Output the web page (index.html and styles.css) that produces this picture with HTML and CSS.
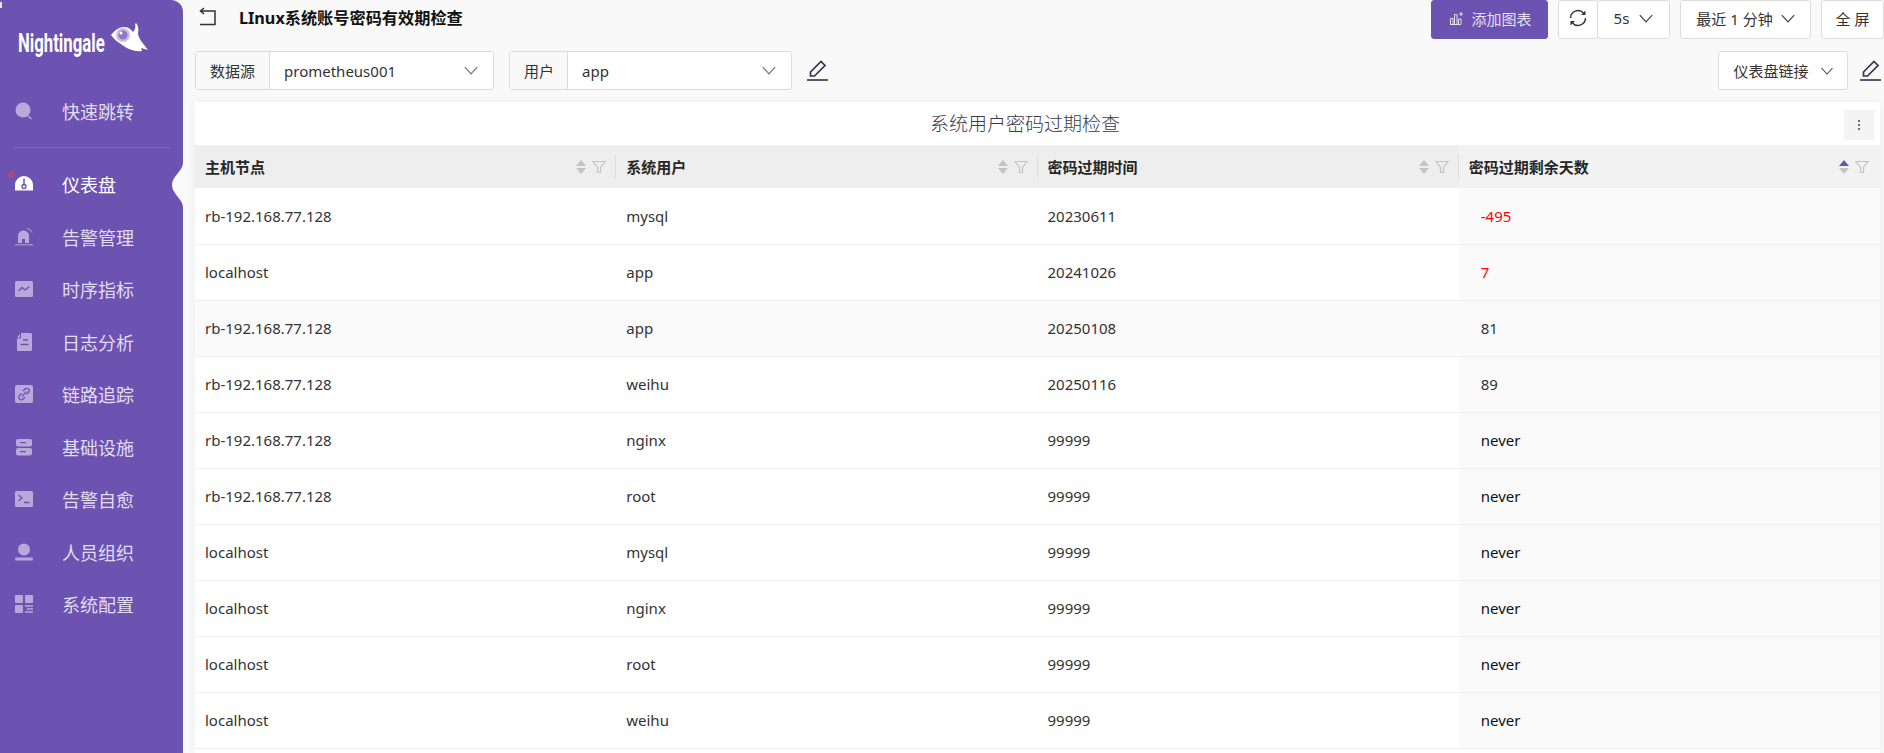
FILE: index.html
```html
<!Doctype html>
<html lang="en">
<head>
  <meta charset="utf-8">
  <title>Nightingale</title>
  <link rel="stylesheet" href="styles.css">
</head>
<body>
  <div class="sidebar">
    <span class="cornerMark"></span>
    <svg class="notch" width="11" height="44" viewBox="0 0 11 44"><path d="M11 0C11 8 0 13 0 22C0 31 11 36 11 44Z" fill="#fafafa"/></svg>
    <div class="logo">
      <span class="logoText">Nightingale</span>
      <svg class="logoIcon" width="38" height="32" viewBox="0 0 38 32">
        <path d="M0 14C4 9 8 6 13 6C17 6 20 8 22 11C24 9 25 6 24 3L25 2C27 4 28 8 27 12C27 16 30 20 37 29L30 27L31 30C24 31 16 28 10 23C6 21 3 18 0 14Z" fill="#fff"/>
        <circle cx="12" cy="14" r="7" fill="#c9bce6"/>
        <circle cx="12" cy="14" r="4.5" fill="#8d77c8"/>
        <circle cx="10" cy="12" r="1.5" fill="#fff"/>
      </svg>
    </div>

    <div class="menuItem searchItem">
      <svg class="menuIcon" viewBox="0 0 18 18"><circle cx="8" cy="8" r="7.5" fill="currentColor"/><path d="M13 14l3.5 3" stroke="currentColor" stroke-width="1.4"/></svg>
      <span>快速跳转</span>
    </div>
    <div class="menuDivider"></div>
    <div class="menuItem activeItem">
      <span class="redDot"></span>
      <svg class="menuIcon" viewBox="0 0 18 18"><path d="M0 15.5V10a9 9 0 0 1 18 0v5.5z" fill="#fff"/><path d="M9 3.5v7" stroke="#6c53b1" stroke-width="1.5"/><circle cx="9" cy="11.5" r="2" fill="none" stroke="#6c53b1" stroke-width="1.3"/></svg>
      <span>仪表盘</span>
    </div>
    <div class="menuItem">
      <svg class="menuIcon" viewBox="0 0 18 18"><path d="M3 15V8a5.5 5.5 0 0 1 11 0v7z" fill="currentColor"/><path d="M7 15v-4h3v4" fill="#6c53b1"/><path d="M0 16.8h18" stroke="currentColor" stroke-width="1"/><path d="M12 0.5a6 6 0 0 1 5 4" fill="none" stroke="currentColor" stroke-width="1"/></svg>
      <span>告警管理</span>
    </div>
    <div class="menuItem">
      <svg class="menuIcon" viewBox="0 0 18 18"><rect y="1" width="18" height="16" rx="1.5" fill="currentColor"/><path d="M3.5 11l3.500-3.500 3 2.500 4.500-3.500" fill="none" stroke="#6c53b1" stroke-width="1.3"/></svg>
      <span>时序指标</span>
    </div>
    <div class="menuItem">
      <svg class="menuIcon" viewBox="0 0 18 18"><path d="M6 0h9.500a1.500 1.500 0 0 1 1.500 1.500v15a1.500 1.500 0 0 1-1.500 1.500h-12A1.500 1.500 0 0 1 2 16.500V5.500h3a1 1 0 0 0 1-1z" fill="currentColor"/><path d="M2 4.500L5 1v3.500z" fill="currentColor"/><path d="M8 7h5M5.500 11.500h8" stroke="#6c53b1" stroke-width="1.3"/></svg>
      <span>日志分析</span>
    </div>
    <div class="menuItem">
      <svg class="menuIcon" viewBox="0 0 18 18"><rect width="18" height="18" rx="2" fill="currentColor"/><path d="M8 6l2-2a2.400 2.400 0 0 1 3.500 3.500l-2 2M10 12l-2 2a2.400 2.400 0 0 1-3.500-3.500l2-2M7 11.500l4.500-5" fill="none" stroke="#6c53b1" stroke-width="1.3"/></svg>
      <span>链路追踪</span>
    </div>
    <div class="menuItem">
      <svg class="menuIcon" viewBox="0 0 18 18"><rect x="1" y="1" width="16" height="7.5" rx="2" fill="currentColor"/><rect x="1" y="10" width="16" height="7.5" rx="2" fill="currentColor"/><path d="M5 4.700h6M5 13.700h6" stroke="#6c53b1" stroke-width="1.2"/></svg>
      <span>基础设施</span>
    </div>
    <div class="menuItem">
      <svg class="menuIcon" viewBox="0 0 18 18"><rect y="1" width="18" height="16" rx="1.5" fill="currentColor"/><path d="M3.500 5l3.500 3-3.500 3M9 12.500h5.500" fill="none" stroke="#6c53b1" stroke-width="1.3"/></svg>
      <span>告警自愈</span>
    </div>
    <div class="menuItem">
      <svg class="menuIcon" viewBox="0 0 18 18"><circle cx="9" cy="6.5" r="6" fill="currentColor"/><rect y="14.5" width="18" height="3" rx="1.5" fill="currentColor"/></svg>
      <span>人员组织</span>
    </div>
    <div class="menuItem">
      <svg class="menuIcon" viewBox="0 0 18 18"><rect width="8" height="8" rx="1" fill="currentColor"/><rect x="10" width="8" height="8" rx="1" fill="currentColor"/><rect y="10" width="8" height="8" rx="1" fill="currentColor"/><path d="M10 11h8M12 14h6M10 17h8" stroke="currentColor" stroke-width="1.3"/></svg>
      <span>系统配置</span>
    </div>
  </div>

  <div class="main">
    <div class="topBar">
      <div class="titleGroup">
        <svg class="backIcon" width="19" height="19" viewBox="0 0 19 19"><path d="M6 1L2.500 4 6 7M3 4h14v13.500H2" fill="none" stroke="#333" stroke-width="1.5"/></svg>
        <h1 class="pageTitle">LInux系统账号密码有效期检查</h1>
      </div>
      <div class="topButtons">
        <button type="button" class="btn primaryBtn">
          <svg width="14" height="14" viewBox="0 0 14 14"><path d="M1 13.500h11M1.500 13V7.500h2.500V13M5.500 13V3.500H8V13M9.500 13V8H12v5" fill="none" stroke="#e4dff2" stroke-width="1"/><path d="M12 1v4M10 3h4" stroke="#e4dff2" stroke-width="1"/></svg>
          添加图表
        </button>
        <div class="btnGroup">
          <button type="button" class="btn refreshBtn">
            <svg width="18" height="18" viewBox="0 0 18 18"><path d="M1.500 9a7.500 7.500 0 0 1 13-5M16.500 9a7.500 7.500 0 0 1-13 5" fill="none" stroke="#333" stroke-width="1.4"/><path d="M16.500 1.500v4.500h-4.500zM1.500 16.500v-4.500h4.500z" fill="#333"/></svg>
          </button>
          <button type="button" class="btn intervalBtn">5s <svg class="chevron" viewBox="0 0 12 8"><path d="M0.500 1L6 7l5.500-6"/></svg></button>
        </div>
        <button type="button" class="btn rangeBtn">最近 1 分钟 <svg class="chevron" viewBox="0 0 12 8"><path d="M0.500 1L6 7l5.500-6"/></svg></button>
        <button type="button" class="btn fullBtn">全 屏</button>
      </div>
    </div>

    <div class="filterBar">
      <div class="filterGroup">
        <div class="selectBox sourceSelect">
          <span class="selectLabel">数据源</span>
          <span class="selectValue">prometheus001 <svg class="chevron" viewBox="0 0 12 8"><path d="M0.500 1L6 7l5.500-6"/></svg></span>
        </div>
        <div class="selectBox userSelect">
          <span class="selectLabel">用户</span>
          <span class="selectValue">app <svg class="chevron" viewBox="0 0 12 8"><path d="M0.500 1L6 7l5.500-6"/></svg></span>
        </div>
        <svg class="editIcon" width="21" height="21" viewBox="0 0 21 21"><path d="M3.500 16V12L14 1.500l4 4L7.500 16z" fill="none" stroke="#33334d" stroke-width="1.7"/><path d="M0 20h21" stroke="#33334d" stroke-width="1.6"/></svg>
      </div>
      <div class="filterGroup">
        <button type="button" class="btn linkBtn">仪表盘链接 <svg class="chevron" viewBox="0 0 12 8"><path d="M0.500 1L6 7l5.500-6"/></svg></button>
        <svg class="editIcon" width="21" height="21" viewBox="0 0 21 21"><path d="M3.500 16V12L14 1.500l4 4L7.500 16z" fill="none" stroke="#33334d" stroke-width="1.7"/><path d="M0 20h21" stroke="#33334d" stroke-width="1.6"/></svg>
      </div>
    </div>

    <div class="panel">
      <div class="panelHead">
        <span class="panelTitle">系统用户密码过期检查</span>
        <span class="panelMenu"><i></i><i></i><i></i></span>
      </div>
      <table class="dataTable">
        <thead>
          <tr>
            <th><div class="thInner"><span>主机节点</span><span class="thTools"><span class="sorter"><i class="up"></i><i class="down"></i></span><svg class="funnel" viewBox="0 0 14 14"><path d="M1 1.500h12L8.500 7.500v5h-3v-5z"/></svg></span></div></th>
            <th><div class="thInner"><span>系统用户</span><span class="thTools"><span class="sorter"><i class="up"></i><i class="down"></i></span><svg class="funnel" viewBox="0 0 14 14"><path d="M1 1.500h12L8.500 7.500v5h-3v-5z"/></svg></span></div></th>
            <th><div class="thInner"><span>密码过期时间</span><span class="thTools"><span class="sorter"><i class="up"></i><i class="down"></i></span><svg class="funnel" viewBox="0 0 14 14"><path d="M1 1.500h12L8.500 7.500v5h-3v-5z"/></svg></span></div></th>
            <th class="sortedHead"><div class="thInner"><span>密码过期剩余天数</span><span class="thTools"><span class="sorter"><i class="up upActive"></i><i class="down"></i></span><svg class="funnel" viewBox="0 0 14 14"><path d="M1 1.500h12L8.500 7.500v5h-3v-5z"/></svg></span></div></th>
          </tr>
        </thead>
        <tbody>
          <tr><td>rb-192.168.77.128</td><td>mysql</td><td>20230611</td><td class="sortedCol redText">-495</td></tr>
          <tr><td>localhost</td><td>app</td><td>20241026</td><td class="sortedCol redText">7</td></tr>
          <tr class="hoverRow"><td>rb-192.168.77.128</td><td>app</td><td>20250108</td><td class="sortedCol">81</td></tr>
          <tr><td>rb-192.168.77.128</td><td>weihu</td><td>20250116</td><td class="sortedCol">89</td></tr>
          <tr><td>rb-192.168.77.128</td><td>nginx</td><td>99999</td><td class="sortedCol darkText">never</td></tr>
          <tr><td>rb-192.168.77.128</td><td>root</td><td>99999</td><td class="sortedCol darkText">never</td></tr>
          <tr><td>localhost</td><td>mysql</td><td>99999</td><td class="sortedCol darkText">never</td></tr>
          <tr><td>localhost</td><td>nginx</td><td>99999</td><td class="sortedCol darkText">never</td></tr>
          <tr><td>localhost</td><td>root</td><td>99999</td><td class="sortedCol darkText">never</td></tr>
          <tr><td>localhost</td><td>weihu</td><td>99999</td><td class="sortedCol darkText">never</td></tr>
        </tbody>
      </table>
    </div>
  </div>
</body>
</html>
```

FILE: styles.css
```css
* {
  box-sizing: border-box;
}

html, body {
  height: 100%;
}

body {
  margin: 0;
  display: flex;
  overflow: hidden;
  background: #f9f9f9;
  color: #333;
  font-family: "Noto Sans", "Noto Sans CJK SC", sans-serif;
  font-size: 15px;
}

/* sidebar */
.sidebar {
  position: relative;
  flex: 0 0 183px;
  height: 100vh;
  background: #6c53b1;
  border-top-right-radius: 12px;
  color: #b9a8dc;
}

.cornerMark {
  position: absolute;
  left: 0;
  top: 2px;
  width: 2px;
  height: 6px;
  background: #e8e4f4;
}

.notch {
  position: absolute;
  right: 0;
  top: 163px;
}

.logo {
  display: flex;
  align-items: flex-end;
  height: 63px;
  padding: 0 0 4px 18px;
}

.logoText {
  width: 87px;
  color: #fff;
  font-family: Roboto, sans-serif;
  font-size: 25px;
  font-weight: 700;
  line-height: 30px;
  white-space: nowrap;
  transform: scaleX(0.67);
  transform-origin: left center;
}

.logoIcon {
  margin: 0 0 6px 6px;
}

.menuItem {
  position: relative;
  display: flex;
  align-items: center;
  height: 52.5px;
  padding-left: 15px;
  color: #b9a8dc;
}

.menuItem span:last-child {
  margin-left: 29px;
  color: #e2dcf0;
  font-size: 18px;
}

.searchItem {
  margin-top: 22px;
}

.menuDivider {
  height: 1px;
  margin: 9px 13px 10.5px 13px;
  background: #7d66c6;
}

.activeItem span:last-child {
  color: #fff;
}

.menuIcon {
  width: 18px;
  height: 18px;
}

.redDot {
  position: absolute;
  left: 8px;
  top: 13px;
  width: 7px;
  height: 7px;
  border-radius: 50%;
  background: #a84a80;
}

/* main area */
.main {
  display: flex;
  flex: 1;
  flex-direction: column;
  min-width: 0;
  height: 100vh;
  padding: 0 4px 0 12px;
  overflow: hidden;
}

.topBar {
  display: flex;
  flex-shrink: 0;
  justify-content: space-between;
  height: 39px;
  margin-right: -4px;
}

.titleGroup {
  display: flex;
  align-items: center;
  height: 33px;
  padding-left: 3px;
}

.backIcon {
  margin-right: 22px;
}

.pageTitle {
  margin: 0;
  color: #111;
  font-size: 16.2px;
  font-weight: 700;
}

.topButtons {
  display: flex;
  gap: 11px;
  flex: 0 0 453px;
}

.btn {
  display: inline-flex;
  align-items: center;
  justify-content: center;
  gap: 8px;
  height: 39px;
  padding: 0;
  border: 1px solid #dcdcdc;
  border-radius: 3px;
  background: #fff;
  color: #333;
  font-family: inherit;
  font-size: 15px;
  white-space: nowrap;
}

.topButtons .btn {
  padding-bottom: 3px;
}

.topButtons .primaryBtn {
  width: 117px;
  margin-right: -1px;
  padding-left: 2px;
  border-color: #6c53b1;
  background: #6c53b1;
  color: #e4dff2;
}

.btnGroup {
  display: flex;
  margin-right: -1px;
}

.refreshBtn {
  width: 40px;
}

.intervalBtn {
  width: 73px;
  margin-left: -1px;
  gap: 10px;
}

.rangeBtn {
  width: 131px;
  margin-right: -1px;
}

.fullBtn {
  width: 63px;
  flex-shrink: 0;
}

.chevron {
  width: 14px;
  height: 9px;
  fill: none;
  stroke: #444;
  stroke-width: 1.1;
}

.filterBar {
  display: flex;
  flex-shrink: 0;
  justify-content: space-between;
  height: 39px;
  margin: 12px -1px 0 0;
}

.filterGroup {
  display: flex;
  align-items: center;
}

.selectBox {
  display: flex;
  height: 39px;
  margin-right: 15px;
  border: 1px solid #dcdcdc;
  border-radius: 3px;
  background: #fff;
}

.sourceSelect {
  width: 299px;
}

.userSelect {
  width: 283px;
}

.selectLabel {
  display: flex;
  align-items: center;
  padding: 0 14px;
  border-right: 1px solid #dcdcdc;
  background: #f9f9f9;
  white-space: nowrap;
}

.userSelect .selectLabel {
  padding-right: 13px;
}

.selectValue {
  display: flex;
  flex: 1;
  align-items: center;
  justify-content: space-between;
  padding: 0 15px 0 14px;
}

.selectValue .chevron {
  stroke: #777;
}

.linkBtn {
  width: 130px;
  margin-right: 12px;
  gap: 12px;
}

.linkBtn .chevron {
  width: 12px;
  height: 8px;
}

.editIcon {
  flex-shrink: 0;
}

/* table panel */
.panel {
  flex: 1;
  margin-top: 12px;
  background: #fff;
  box-shadow: 0 0 10px rgba(0, 0, 0, 0.05);
}

.panelHead {
  position: relative;
  height: 43px;
  padding-right: 25px;
  text-align: center;
}

.panelTitle {
  color: #3a3a4a;
  font-size: 19px;
  font-weight: 300;
  line-height: 44px;
}

.panelMenu {
  position: absolute;
  right: 6px;
  top: 8px;
  display: flex;
  flex-direction: column;
  align-items: center;
  justify-content: center;
  gap: 2px;
  width: 30px;
  height: 30px;
  background: #f4f4f4;
}

.panelMenu i {
  width: 2px;
  height: 2px;
  border-radius: 50%;
  background: #444;
}

.dataTable {
  width: 100%;
  border-collapse: collapse;
  table-layout: fixed;
}

.dataTable th {
  height: 43px;
  padding: 0;
  background: #eeeeee;
  color: #262626;
  font-size: 15px;
  font-weight: 700;
  text-align: left;
}

.thInner {
  display: flex;
  align-items: center;
  justify-content: space-between;
  height: 24px;
  padding: 0 9px 0 10px;
  border-right: 1px solid #dedede;
}

.dataTable th:last-child .thInner {
  border-right: none;
  padding-right: 11px;
}

.dataTable th.sortedHead {
  background: #f2f2f2;
}

.thTools {
  display: flex;
  align-items: center;
  gap: 6px;
}

.sorter {
  display: flex;
  flex-direction: column;
  gap: 2px;
}

.sorter i {
  width: 0;
  height: 0;
  border-left: 5.5px solid transparent;
  border-right: 5.5px solid transparent;
}

.sorter .up {
  border-bottom: 6px solid #c4c4c4;
}

.sorter .down {
  border-top: 6px solid #c4c4c4;
}

.sorter .upActive {
  border-bottom-color: #6c53b1;
}

.funnel {
  width: 14px;
  height: 14px;
  fill: none;
  stroke: #c4c4c4;
  stroke-width: 1.2;
}

.dataTable td {
  height: 56px;
  padding: 0 10px;
  border-bottom: 1px solid #efefef;
  color: #333;
}

.hoverRow td {
  background: #fafafa;
}

.dataTable td.sortedCol {
  padding-left: 22px;
  background: #fafafa;
}

.dataTable td.redText {
  color: #ff0000;
}

.dataTable td.darkText {
  color: #111;
}
```
